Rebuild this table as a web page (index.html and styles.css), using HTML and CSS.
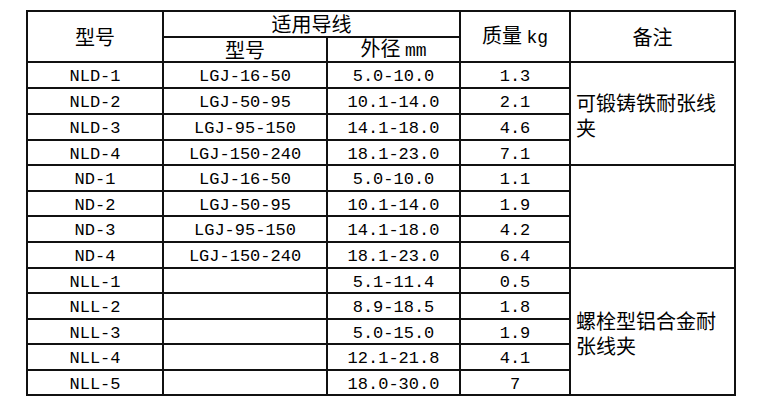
FILE: index.html
```html
<!DOCTYPE html>
<html lang="zh-CN">
<head>
<meta charset="utf-8">
<title>耐张线夹</title>
<link rel="stylesheet" href="styles.css">
</head>
<body>
<div class="page">
<table class="spec">
  <colgroup>
    <col class="c1"><col class="c2"><col class="c3"><col class="c4"><col class="c5">
  </colgroup>
  <thead>
    <tr class="h1">
      <th rowspan="2" class="cn">型号</th>
      <th colspan="2" class="cn">适用导线</th>
      <th rowspan="2" class="cn">质量 <span class="lat">kg</span></th>
      <th rowspan="2" class="cn">备注</th>
    </tr>
    <tr class="h2">
      <th class="cn">型号</th>
      <th class="cn">外径 <span class="lat">mm</span></th>
    </tr>
  </thead>
  <tbody>
    <tr class="ra"><td>NLD-1</td><td>LGJ-16-50</td><td>5.0-10.0</td><td>1.3</td><td rowspan="4" class="note">可锻铸铁耐张线夹</td></tr>
    <tr class="ra"><td>NLD-2</td><td>LGJ-50-95</td><td>10.1-14.0</td><td>2.1</td></tr>
    <tr class="ra"><td>NLD-3</td><td>LGJ-95-150</td><td>14.1-18.0</td><td>4.6</td></tr>
    <tr class="rb"><td>NLD-4</td><td>LGJ-150-240</td><td>18.1-23.0</td><td>7.1</td></tr>
    <tr class="ra"><td>ND-1</td><td>LGJ-16-50</td><td>5.0-10.0</td><td>1.1</td><td rowspan="4" class="note"></td></tr>
    <tr class="rb"><td>ND-2</td><td>LGJ-50-95</td><td>10.1-14.0</td><td>1.9</td></tr>
    <tr class="ra"><td>ND-3</td><td>LGJ-95-150</td><td>14.1-18.0</td><td>4.2</td></tr>
    <tr class="ra"><td>ND-4</td><td>LGJ-150-240</td><td>18.1-23.0</td><td>6.4</td></tr>
    <tr class="rb"><td>NLL-1</td><td></td><td>5.1-11.4</td><td>0.5</td><td rowspan="5" class="note">螺栓型铝合金耐张线夹</td></tr>
    <tr class="ra"><td>NLL-2</td><td></td><td>8.9-18.5</td><td>1.8</td></tr>
    <tr class="rb"><td>NLL-3</td><td></td><td>5.0-15.0</td><td>1.9</td></tr>
    <tr class="ra"><td>NLL-4</td><td></td><td>12.1-21.8</td><td>4.1</td></tr>
    <tr class="rb"><td>NLL-5</td><td></td><td>18.0-30.0</td><td>7</td></tr>
  </tbody>
</table>
</div>
</body>
</html>
```
FILE: styles.css
```css
html, body {
  margin: 0;
  padding: 0;
  background: #fff;
}
.page {
  padding: 10px 0 0 26px;
}
.spec {
  border-collapse: collapse;
  table-layout: fixed;
  width: 710px;
  color: #000;
}
.c1 { width: 136px; }
.c2 { width: 164px; }
.c3 { width: 133px; }
.c4 { width: 110px; }
.c5 { width: 165px; }
.spec th, .spec td {
  border: 2px solid #111;
  padding: 0;
  text-align: center;
  vertical-align: middle;
  font-family: "Liberation Mono", "Noto Sans CJK SC", monospace;
  font-size: 17px;
  font-weight: normal;
  line-height: 18px;
  white-space: nowrap;
}
.spec td {
  padding-top: 4px;
}
.spec th.cn {
  font-family: "Noto Sans CJK SC", sans-serif;
  font-size: 20px;
  line-height: 20px;
}
.spec .lat {
  font-family: "Liberation Mono", monospace;
  font-size: 18px;
}
.h1 { height: 26px; }
.h2 { height: 25px; }
.ra { height: 26px; }
.rb { height: 25px; }
.spec td.note {
  font-family: "Noto Sans CJK SC", sans-serif;
  font-size: 20px;
  line-height: 25px;
  text-align: left;
  white-space: normal;
  padding: 2px 6px 0 5px;
}
```
